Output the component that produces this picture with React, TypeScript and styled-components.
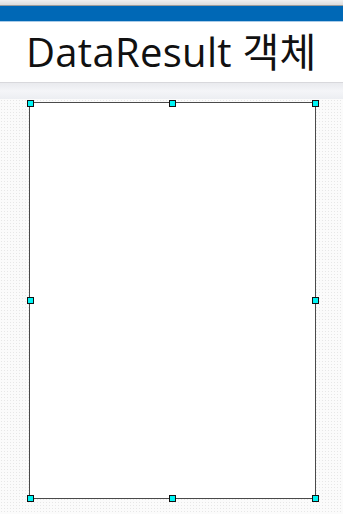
import React from "react";
import styled, { createGlobalStyle } from "styled-components";

const Global = createGlobalStyle`
  html, body { margin: 0; padding: 0; background: #ffffff; }
  body { width: 343px; height: 514px; overflow: hidden; }
`;

const Page = styled.div`
  width: 343px;
  height: 514px;
  display: flex;
  flex-direction: column;
  background: #ffffff;
`;

const TopStrip = styled.div`
  height: 5px;
  background: linear-gradient(#f0f0f0, #dcdcdc);
  border-bottom: 1px solid #9c9c9c;
`;

const BlueBar = styled.div`
  height: 15px;
  background: #0068b6;
  border-bottom: 1px solid #a9cbe8;
`;

const Header = styled.div`
  height: 60px;
  display: flex;
  align-items: center;
  padding-left: 26px;
  background: #ffffff;
  border-bottom: 1px solid #d8d8dc;
`;

const Title = styled.h1`
  margin: 0;
  font-family: "Open Sans", "Noto Sans CJK KR", sans-serif;
  font-weight: 400;
  font-size: 40px;
  line-height: 1;
  color: #111111;
  letter-spacing: 0.3px;
`;

const Shelf = styled.div`
  height: 16px;
  background: linear-gradient(#e9eaee, #f4f5f8 50%, #eceef2);
`;

const Canvas = styled.div`
  flex: 1;
  background-color: #fbfbfb;
  background-image: radial-gradient(#e7e7e7 0.7px, transparent 0.8px);
  background-size: 3px 3px;
  padding: 3px 0 0 29px;
`;

const Frame = styled.div`
  position: relative;
  width: 285px;
  height: 395px;
  background: #ffffff;
  border: 1px solid #4a4a4a;
`;

const Handle = styled.span<{ $x: number; $y: number }>`
  position: absolute;
  width: 5px;
  height: 5px;
  background: #00f4f4;
  border: 1px solid #111111;
  left: calc(${(p) => p.$x}% - 3.5px);
  top: calc(${(p) => p.$y}% - 3.5px);
`;

const handles: Array<[number, number]> = [
  [0, 0],
  [50, 0],
  [100, 0],
  [0, 50],
  [100, 50],
  [0, 100],
  [50, 100],
  [100, 100],
];

export default function App() {
  return (
    <>
      <Global />
      <Page>
        <TopStrip />
        <BlueBar />
        <Header>
          <Title>DataResult 객체</Title>
        </Header>
        <Shelf />
        <Canvas>
          <Frame>
            {handles.map(([x, y], i) => (
              <Handle key={i} $x={x} $y={y} />
            ))}
          </Frame>
        </Canvas>
      </Page>
    </>
  );
}
